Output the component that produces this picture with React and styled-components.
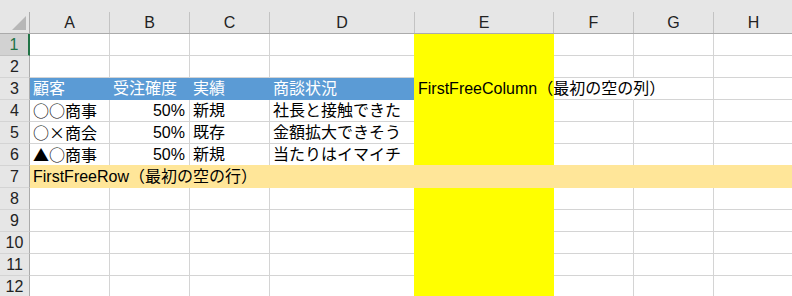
import React from "react";
import styled, { createGlobalStyle } from "styled-components";

const GlobalStyle = createGlobalStyle`
  html, body {
    margin: 0;
    padding: 0;
    background: #ffffff;
    overflow: hidden;
  }
`;

const LATIN = `"Liberation Sans", "Noto Sans CJK JP", sans-serif`;
const CJK = `"Noto Sans CJK JP", "Liberation Sans", sans-serif`;

const GRID = "#d4d4d4";
const HEAD_BG = "#e6e6e6";
const HEAD_LINE = "#ababab";

const FILLS = {
  blue: "#5b9bd5",
  yellow: "#ffff00",
  orange: "#ffe699",
};

const COLUMNS = [
  { key: "A", width: 80 },
  { key: "B", width: 80 },
  { key: "C", width: 80 },
  { key: "D", width: 145 },
  { key: "E", width: 139 },
  { key: "F", width: 80 },
  { key: "G", width: 80 },
  { key: "H", width: 80 },
];

const Sheet = styled.div`
  display: grid;
  grid-template-columns: 30px ${COLUMNS.map((c) => `${c.width}px`).join(" ")};
  grid-template-rows: 34px repeat(12, 22px);
  width: 792px;
  height: 296px;
  overflow: hidden;
  font-family: ${LATIN};
  font-size: 16px;
  color: #000;
`;

/* column header strip */
const HeadSlot = styled.div`
  background: ${HEAD_BG};
  padding-top: 12px;
  border-bottom: 1px solid ${HEAD_LINE};
  box-sizing: border-box;
`;

const HeadLabel = styled.div`
  height: 21px;
  box-sizing: border-box;
  border-right: 1px solid #c3c3c3;
  display: flex;
  align-items: center;
  justify-content: center;
  font-size: 16px;
  color: #222;
`;

const CornerLabel = styled(HeadLabel)`
  border-right-color: ${HEAD_LINE};
  align-items: flex-end;
  justify-content: flex-end;
  padding: 0 3px 3px 0;
`;

/* row number column */
const RowHead = styled.div`
  box-sizing: border-box;
  background: ${(p) => (p.$active ? "#d2d2d2" : HEAD_BG)};
  border-right: ${(p) => (p.$active ? "2px solid #217346" : `1px solid ${HEAD_LINE}`)};
  border-bottom: 1px solid ${(p) => (p.$active ? "#c2c2c2" : GRID)};
  display: flex;
  align-items: center;
  justify-content: center;
  font-size: 16px;
  line-height: 21px;
  color: ${(p) => (p.$active ? "#217346" : "#222")};
`;

/* worksheet cell; text may run on into empty neighbours */
const Cell = styled.div`
  box-sizing: border-box;
  min-width: 0;
  padding: 0 4px 0 3px;
  line-height: 21px;
  white-space: nowrap;
  overflow: visible;
  text-align: ${(p) => (p.$align === "right" ? "right" : "left")};
  color: ${(p) => (p.$fill === "blue" ? "#ffffff" : "#000000")};
  background: ${(p) => (p.$fill ? FILLS[p.$fill] : "transparent")};
  border-right: 1px solid
    ${(p) => (p.$noRight ? "transparent" : p.$fill ? FILLS[p.$fill] : GRID)};
  border-bottom: 1px solid ${(p) => (p.$fill ? FILLS[p.$fill] : GRID)};
  box-shadow: ${(p) =>
    p.$fill === "yellow"
      ? `-1px 0 0 ${FILLS.yellow}`
      : p.$fill === "orange"
      ? `0 -1px 0 ${FILLS.orange}`
      : "none"};
  grid-column: ${(p) => p.$span || "auto"};
`;

const Glyphs = styled.span`
  font-family: ${CJK};
`;

const Triangle = () => (
  <svg width="14" height="14" viewBox="0 0 14 14" aria-hidden="true">
    <polygon points="14,0 14,14 0,14" fill="#b7b7b7" />
  </svg>
);

const rowContent = {
  3: {
    A: { text: "顧客", fill: "blue" },
    B: { text: "受注確度", fill: "blue" },
    C: { text: "実績", fill: "blue" },
    D: { text: "商談状況", fill: "blue" },
    E: { text: "FirstFreeColumn（最初の空の列）" },
    F: { noRight: true },
  },
  4: {
    A: { text: <Glyphs>○○商事</Glyphs> },
    B: { text: "50%", align: "right" },
    C: { text: "新規" },
    D: { text: "社長と接触できた" },
  },
  5: {
    A: { text: <Glyphs>○×商会</Glyphs> },
    B: { text: "50%", align: "right" },
    C: { text: "既存" },
    D: { text: "金額拡大できそう" },
  },
  6: {
    A: { text: <Glyphs>▲○商事</Glyphs> },
    B: { text: "50%", align: "right" },
    C: { text: "新規" },
    D: { text: "当たりはイマイチ" },
  },
};

export default function App() {
  const rows = Array.from({ length: 12 }, (_, i) => i + 1);

  return (
    <>
      <GlobalStyle />
      <Sheet>
        <HeadSlot>
          <CornerLabel>
            <Triangle />
          </CornerLabel>
        </HeadSlot>
        {COLUMNS.map((c) => (
          <HeadSlot key={c.key}>
            <HeadLabel>{c.key}</HeadLabel>
          </HeadSlot>
        ))}

        {rows.map((r) => (
          <React.Fragment key={r}>
            <RowHead $active={r === 1}>{r}</RowHead>
            {r === 7 ? (
              <Cell $fill="orange" $span="2 / -1">
                FirstFreeRow（最初の空の行）
              </Cell>
            ) : (
              COLUMNS.map((c) => {
                const spec = (rowContent[r] && rowContent[r][c.key]) || {};
                const fill = spec.fill || (c.key === "E" ? "yellow" : undefined);
                return (
                  <Cell
                    key={c.key}
                    $fill={fill}
                    $align={spec.align}
                    $noRight={spec.noRight}
                  >
                    {spec.text}
                  </Cell>
                );
              })
            )}
          </React.Fragment>
        ))}
      </Sheet>
    </>
  );
}
